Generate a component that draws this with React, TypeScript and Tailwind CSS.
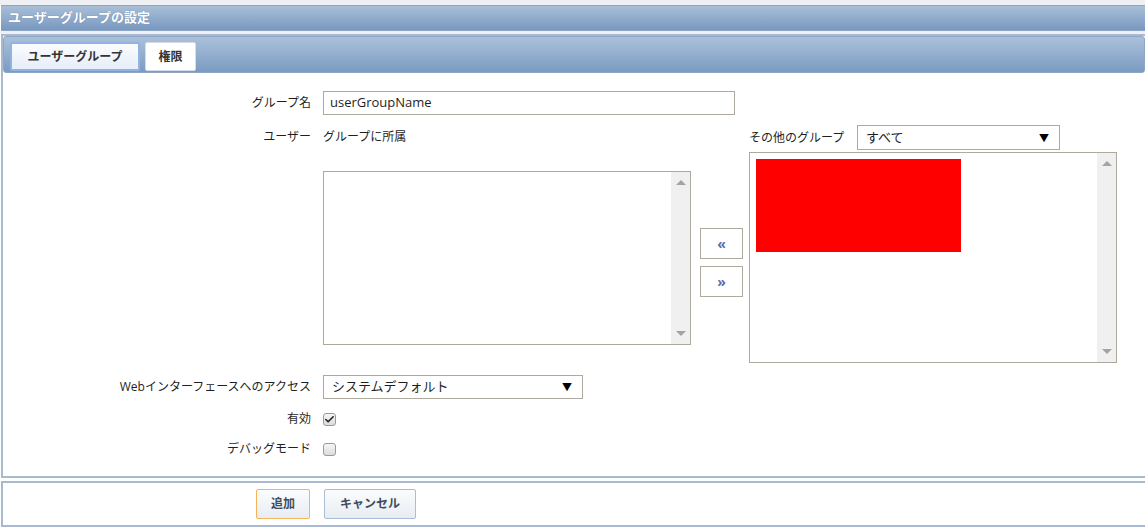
import { Check } from "lucide-react";

const font = "font-['Open_Sans','Noto_Sans_CJK_JP',sans-serif]";

function ListBox({ className, children }: { className: string; children?: React.ReactNode }) {
  return (
    <div className={`flex border border-[#aeaa9e] bg-white ${className}`}>
      <div className="relative flex-1">{children}</div>
      <div className="flex w-[19px] flex-col items-center justify-between bg-[#f0f0f0] py-[8px]">
        <span className="h-0 w-0 border-x-[5px] border-b-[5px] border-x-transparent border-b-[#a3a3a3]" />
        <span className="h-0 w-0 border-x-[5px] border-t-[5px] border-x-transparent border-t-[#a3a3a3]" />
      </div>
    </div>
  );
}

function Select({ value, className }: { value: string; className: string }) {
  return (
    <div
      className={`flex items-center justify-between border border-[#aeaa9e] bg-white pl-[8px] pr-[10px] text-[13px] text-[#1f1f1f] ${className}`}
    >
      <span>{value}</span>
      <span className="text-[10px] leading-none text-black">▼</span>
    </div>
  );
}

function CheckBox({ checked }: { checked?: boolean }) {
  return (
    <span className="flex h-[13px] w-[13px] items-center justify-center rounded-[3px] border border-[#9a9a9a] bg-gradient-to-b from-[#f6f6f6] to-[#dcdcdc]">
      {checked ? <Check className="size-[11px] text-[#222]" strokeWidth={3.5} /> : null}
    </span>
  );
}

export default function App() {
  return (
    <div className={`h-[529px] w-[1145px] overflow-hidden bg-white text-[12px] text-[#1f1f1f] ${font}`}>
      <div className="h-[5px] bg-[#eef0f3]" />
      {/* page title */}
      <div className="ml-[1px] flex h-[26px] items-center border-y border-[#8ea6c3] bg-gradient-to-b from-[#a9bfd8] to-[#7898c0] pl-[7px] text-[13px] font-bold text-white [text-shadow:0_0_1px_#5a7aa0]">
        ユーザーグループの設定
      </div>
      <div className="h-[3px] bg-[#eef0f3]" />

      {/* main panel */}
      <div className="ml-[1px] flex h-[444px] flex-col border-2 border-r-0 border-[#a7bad1]">
        <div className="flex h-[37px] items-end gap-[5px] rounded-[3px] border border-[#8ea6c3] bg-gradient-to-b from-[#abc1da] to-[#7b9bc2] pl-[6px]">
          <div className="mb-[1px] flex h-[29px] w-[130px] items-center justify-center rounded-[2px] border-2 border-[#8fb4e4] bg-gradient-to-b from-[#fbfcfe] to-[#e6eef8] text-[12px] font-bold text-[#333]">
            ユーザーグループ
          </div>
          <div className="mb-[1px] flex h-[29px] w-[51px] items-center justify-center rounded-[2px] border border-[#d5dde8] bg-white text-[12px] font-bold text-[#333]">
            権限
          </div>
        </div>

        <div className="flex flex-col pt-[18px]">
          {/* group name */}
          <div className="grid grid-cols-[308px_1fr] gap-x-[12px]">
            <div className="flex items-center justify-end">グループ名</div>
            <div className="flex h-[24px] w-[412px] items-center border border-[#aeaa9e] bg-white pl-[6px] text-[13px]">
              userGroupName
            </div>
          </div>

          {/* users */}
          <div className="mt-[10px] grid grid-cols-[308px_1fr] gap-x-[12px]">
            <div className="pt-[4px] text-right leading-[16px]">ユーザー</div>
            <div className="flex">
              <div className="flex w-[368px] flex-col">
                <div className="pt-[4px] leading-[16px]">グループに所属</div>
                <ListBox className="mt-[26px] h-[174px]" />
              </div>
              <div className="ml-[9px] mr-[6px] flex w-[43px] flex-col gap-[7px] pt-[103px]">
                <div className="flex h-[31px] items-center justify-center border border-[#aeaa9e] bg-white text-[14px] font-bold leading-none text-[#5b6fae]">
                  «
                </div>
                <div className="flex h-[31px] items-center justify-center border border-[#aeaa9e] bg-white text-[14px] font-bold leading-none text-[#5b6fae]">
                  »
                </div>
              </div>
              <div className="flex w-[368px] flex-col">
                <div className="flex h-[25px] items-center">
                  <span className="w-[108px]">その他のグループ</span>
                  <Select value="すべて" className="h-[25px] w-[203px]" />
                </div>
                <ListBox className="mt-[2px] h-[211px]">
                  <div className="absolute left-[6px] top-[6px] h-[93px] w-[205px] bg-[#ff0000]" />
                </ListBox>
              </div>
            </div>
          </div>

          {/* web access */}
          <div className="mt-[12px] grid grid-cols-[308px_1fr] gap-x-[12px]">
            <div className="flex items-center justify-end">Webインターフェースへのアクセス</div>
            <Select value="システムデフォルト" className="h-[24px] w-[260px]" />
          </div>

          <div className="mt-[10px] grid h-[20px] grid-cols-[308px_1fr] gap-x-[12px]">
            <div className="flex items-center justify-end">有効</div>
            <div className="flex items-center">
              <CheckBox checked />
            </div>
          </div>

          <div className="mt-[10px] grid h-[20px] grid-cols-[308px_1fr] gap-x-[12px]">
            <div className="flex items-center justify-end">デバッグモード</div>
            <div className="flex items-center">
              <CheckBox />
            </div>
          </div>
        </div>
      </div>

      <div className="h-[3px] bg-white" />

      {/* footer */}
      <div className="ml-[1px] flex h-[46px] border-2 border-r-0 border-[#a7bad1] pt-[6px]">
        <div className="ml-[253px] flex h-[30px] w-[54px] items-center justify-center rounded-[2px] border border-[#f5b35a] bg-gradient-to-b from-[#fbfcfd] to-[#e8edf3] text-[12px] font-bold text-[#3f4d5e]">
          追加
        </div>
        <div className="ml-[14px] flex h-[30px] w-[92px] items-center justify-center rounded-[2px] border border-[#a9bdd5] bg-gradient-to-b from-[#fbfcfd] to-[#e8edf3] text-[12px] font-bold text-[#3f4d5e]">
          キャンセル
        </div>
      </div>
    </div>
  );
}
